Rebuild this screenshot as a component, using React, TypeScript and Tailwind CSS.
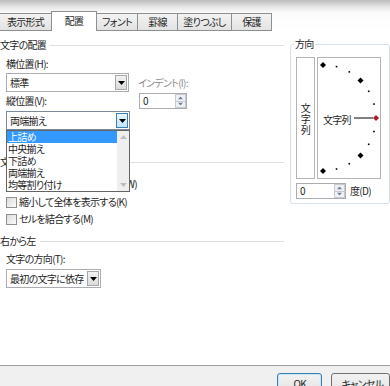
import React from "react";

const tabs = [
  { label: "表示形式", w: "w-[53px] -ml-[11px]" },
  { label: "配置", w: "w-[46px]", active: true },
  { label: "フォント", w: "w-[42px]" },
  { label: "罫線", w: "w-[41px]" },
  { label: "塗りつぶし", w: "w-[55px]" },
  { label: "保護", w: "w-[41px]" },
];

function Arrow({ className = "" }: { className?: string }) {
  return (
    <svg width="7" height="4" viewBox="0 0 7 4" className={className}>
      <path d="M0 0h7L3.5 4z" fill="currentColor" />
    </svg>
  );
}

function Combo({ text, className, focused }: { text: string; className: string; focused?: boolean }) {
  return (
    <div className={`flex h-[19px] border bg-white ${focused ? "border-[#7a8a99]" : "border-[#abadb3]"} ${className}`}>
      <div className="flex flex-1 items-center overflow-hidden whitespace-nowrap pl-[3px]">{text}</div>
      <div
        className={`m-px flex w-[12px] shrink-0 items-center justify-center border ${
          focused
            ? "border-[#3c7fb1] bg-[linear-gradient(to_bottom,#eaf6fd,#bee6fd)]"
            : "border-[#a7a7a7] bg-[linear-gradient(to_bottom,#f2f2f2,#dcdcdc)]"
        }`}
      >
        <Arrow className="text-black" />
      </div>
    </div>
  );
}

function Spin({ className }: { className: string }) {
  return (
    <div className={`flex border border-[#abadb3] bg-white ${className}`}>
      <div className="flex flex-1 items-center pl-[3px]">0</div>
      <div className="flex w-[11px] flex-col">
        <div className="flex flex-1 items-center justify-center border border-[#c7cbd1] bg-[#eef1f4]">
          <Arrow className="rotate-180 scale-75 text-[#6e7d92]" />
        </div>
        <div className="flex flex-1 items-center justify-center border border-t-0 border-[#c7cbd1] bg-[#eef1f4]">
          <Arrow className="scale-75 text-[#6e7d92]" />
        </div>
      </div>
    </div>
  );
}

function Header({ text, className = "" }: { text: string; className?: string }) {
  return (
    <div className={`flex h-[14px] items-center ${className}`}>
      <span>{text}</span>
      <div className="ml-[4px] h-px flex-1 bg-[#dcdfe3]" />
    </div>
  );
}

function Check({ text, className = "" }: { text: string; className?: string }) {
  return (
    <div className={`flex h-[16px] items-center pl-[6px] ${className}`}>
      <div className="h-[11px] w-[11px] border border-[#8e8f8f] bg-[linear-gradient(135deg,#dcdcdc,#fbfbfb)]" />
      <span className="ml-[2px]">{text}</span>
    </div>
  );
}

const dots = [90, 75, 60, 45, 30, 15, -15, -30, -45, -60, -75, -90];

export default function App() {
  return (
    <div className="relative h-[386px] w-[390px] overflow-hidden bg-white font-['Noto_Sans_CJK_JP',sans-serif] text-[10px] leading-none tracking-[-0.7px] text-[#1e1e1e] [font-feature-settings:'palt']">
      {/* tab strip */}
      <div className="flex h-[31px] items-end bg-[linear-gradient(to_bottom,#bdbdbd_0px,#e6e6e6_7px,#fbfbfb_13px,#ffffff_31px)]">
        {tabs.map((t) =>
          t.active ? (
            <div
              key={t.label}
              className={`${t.w} -ml-px flex h-[20px] items-center justify-center border border-b-0 border-[#8e8f8f] bg-white pb-[1px]`}
            >
              {t.label}
            </div>
          ) : (
            <div
              key={t.label}
              className={`${t.w} -ml-px flex h-[18px] items-center justify-center border border-[#8e8f8f] bg-[linear-gradient(to_bottom,#f3f3f3,#e2e2e2)] pb-[1px]`}
            >
              {t.label}
            </div>
          )
        )}
      </div>

      <div className="flex h-[334px]">
        {/* left column */}
        <div className="w-[290px]">
          <Header text="文字の配置" className="mt-[7px]" />
          <div className="mt-[5px] flex h-[14px] items-center pl-[6px]">横位置(H):</div>
          <div className="mt-[2px] flex h-[19px] items-center">
            <Combo text="標準" className="ml-[6px] w-[123px]" />
            <span className="ml-[9px] text-[#8d8d8d]">インデント(I):</span>
          </div>
          <div className="flex h-[18px]">
            <div className="flex w-[139px] items-center pl-[6px]">縦位置(V):</div>
            <Spin className="mt-[1px] h-[16px] w-[48px]" />
          </div>
          <div className="relative ml-[6px] mt-[1px] w-[124px]">
            <Combo text="両端揃え" className="w-[124px]" focused />
            <div className="absolute left-0 top-full z-10 flex w-[124px] border border-[#646464] bg-white">
              <div className="flex-1">
                {["上詰め", "中央揃え", "下詰め", "両端揃え", "均等割り付け"].map((s, i) => (
                  <div
                    key={s}
                    className={`flex h-[12px] items-center pl-[1px] ${i === 0 ? "bg-[#3399ff] text-white" : ""}`}
                  >
                    {s}
                  </div>
                ))}
              </div>
              <div className="flex w-[12px] flex-col justify-between bg-[#efefef] py-[4px]">
                <Arrow className="mx-auto rotate-180 text-[#bdbdbd]" />
                <Arrow className="mx-auto text-[#bdbdbd]" />
              </div>
            </div>
          </div>
          <Header text="文字の制御" className="mt-[25px]" />
          <Check text="折り返して全体を表示する(W)" className="mt-[7px]" />
          <Check text="縮小して全体を表示する(K)" className="mt-[2px]" />
          <Check text="セルを結合する(M)" className="mt-[1px]" />
          <Header text="右から左" className="mt-[7px]" />
          <div className="mt-[4px] flex h-[14px] items-center pl-[6px]">文字の方向(T):</div>
          <Combo text="最初の文字に依存" className="ml-[6px] mt-[3px] w-[95px]" />
        </div>

        {/* right column */}
        <div className="ml-[6px] flex-1">
          <div className="relative mt-[13px] h-[160px] w-[100px] rounded-[3px] border border-[#d5dfe5] pl-[5px] pt-[12px]">
            <span className="absolute -top-[6px] left-[3px] bg-white px-[1px]">方向</span>
            <div className="flex gap-[2px]">
              <div className="flex h-[122px] w-[19px] flex-col items-center justify-center border border-[#b4b4b4] leading-[11px]">
                <span>文</span>
                <span>字</span>
                <span>列</span>
              </div>
              <div className="relative h-[122px] w-[64px] border border-[#b4b4b4]">
                <svg width="64" height="122" className="absolute -left-px -top-px">
                  {dots.map((a) => {
                    const r = (a * Math.PI) / 180;
                    const x = 6 + 53 * Math.cos(r);
                    const y = 61 - 53 * Math.sin(r);
                    const big = Math.abs(a) === 90 || Math.abs(a) === 45;
                    return big ? (
                      <path key={a} d={`M${x} ${y - 3}L${x + 3} ${y}L${x} ${y + 3}L${x - 3} ${y}Z`} fill="#000" />
                    ) : (
                      <rect key={a} x={x - 1} y={y - 1} width="1.6" height="1.6" fill="#000" />
                    );
                  })}
                  <line x1="37" y1="61" x2="56" y2="61" stroke="#000" strokeWidth="1" />
                  <path d="M59 58L62 61L59 64L56 61Z" fill="#b0182b" />
                </svg>
                <span className="absolute left-[5px] top-[57px]">文字列</span>
              </div>
            </div>
            <div className="mt-[4px] flex items-center">
              <Spin className="h-[16px] w-[50px]" />
              <span className="ml-[4px]">度(D)</span>
            </div>
          </div>
        </div>
      </div>

      {/* button bar */}
      <div className="flex h-[21px] border-t border-[#a0a0a0] bg-[#f0f0f0] pl-[277px] pt-[7px]">
        <div className="flex h-[22px] w-[56px] justify-center rounded-[3px] border border-[#3c7fb1] bg-[linear-gradient(to_bottom,#f2f2f2,#e3e3e3)] pt-[5px] shadow-[inset_0_0_0_1px_#c4e5f6]">
          OK
        </div>
        <div className="ml-[9px] flex h-[22px] w-[70px] rounded-[3px] border border-[#707070] bg-[linear-gradient(to_bottom,#f2f2f2,#e3e3e3)] pl-[9px] pt-[5px]">
          キャンセル
        </div>
      </div>
    </div>
  );
}
